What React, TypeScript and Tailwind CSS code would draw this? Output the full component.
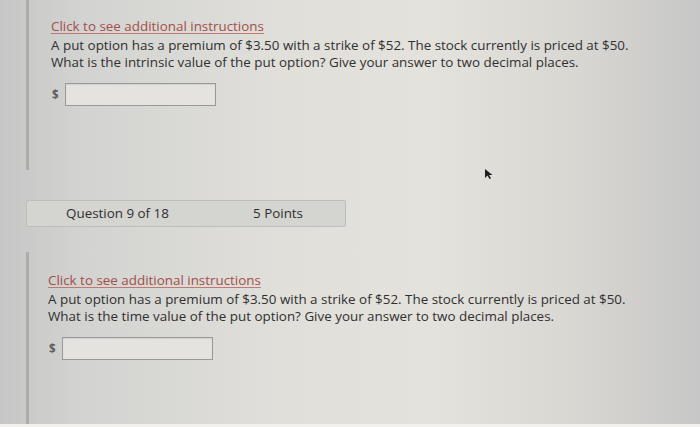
import React from "react";

const font = { fontFamily: '"Open Sans", "Noto Sans", sans-serif' };

function QuestionBlock({ kind }: { kind: string }) {
  return (
    <div className="text-[13.4px] leading-[17px] text-[#303030]">
      <div className="mb-[2px] text-[#a24f49] underline decoration-[#c07a74] underline-offset-2">
        Click to see additional instructions
      </div>
      <div>A put option has a premium of $3.50 with a strike of $52. The stock currently is priced at $50.</div>
      <div>What is the {kind} value of the put option? Give your answer to two decimal places.</div>
      <div className="mt-[12px] flex items-center gap-[6px] pl-[1px]">
        <span className="text-[11.5px] font-bold text-[#5e5e5e]">$</span>
        <div className="h-[23px] w-[151px] border border-[#999999] bg-[#e4e3df] shadow-[inset_0_1px_1px_rgba(0,0,0,0.08)]" />
      </div>
    </div>
  );
}

export default function App() {
  return (
    <div
      className="relative h-[427px] w-[700px] overflow-hidden bg-[linear-gradient(90deg,#c6c6c6_0%,#d3d3d1_12%,#e0dfda_40%,#e4e2dc_62%,#d9d7d2_82%,#c7c7c7_100%)]"
      style={font}
    >
      <div className="flex h-[424px] flex-col pl-[26px]">
        <div className="flex h-[170px] border-l-[3px] border-[#acacab]">
          <div className="pl-[22px] pt-[18px]">
            <QuestionBlock kind="intrinsic" />
          </div>
        </div>

        <div className="mt-[30px] flex h-[27px] w-[320px] items-center rounded-[2px] border border-[#bdbdbb] bg-[#d4d4d1] text-[13.4px] text-[#303030]">
          <span className="ml-[39px] w-[187px]">Question 9 of 18</span>
          <span>5 Points</span>
        </div>

        <div className="mt-[25px] flex flex-1 border-l-[3px] border-[#acacab]">
          <div className="pl-[19px] pt-[20px]">
            <QuestionBlock kind="time" />
          </div>
        </div>
      </div>
      <div className="h-[3px] bg-[#f2f1ee]" />

      <svg className="absolute left-[484px] top-[168px]" width="10" height="12" viewBox="0 0 10 12">
        <path d="M1 1 L1 10 L3.5 7.5 L5.5 11 L7 10.2 L5 7 L8.5 7 Z" fill="#1e1e1e" />
      </svg>
    </div>
  );
}
